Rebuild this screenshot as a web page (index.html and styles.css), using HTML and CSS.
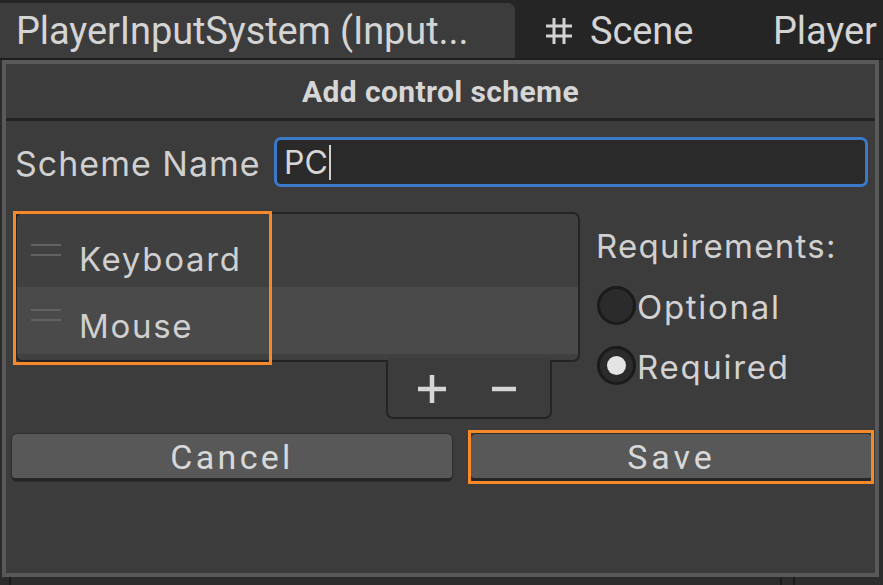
FILE: index.html
```html
<!DOCTYPE html>
<html>
<head>
<meta charset="utf-8">
<link rel="stylesheet" href="styles.css">
</head>
<body>
<div class="tabbar">
  <div class="tab active">PlayerInputSystem (Input...</div>
  <div class="tab scene">
    <svg class="hash" width="30" height="30" viewBox="0 0 30 30">
      <path d="M10 2V28M20 2V28M2 10H28M2 20H28" stroke="#d2d2d2" stroke-width="3" fill="none"/>
    </svg>
    <span>Scene</span>
  </div>
  <div class="tab">Player</div>
</div>
<div class="frame">
  <div class="header">Add control scheme</div>
  <div class="content">
    <div class="name-row">
      <span class="label">Scheme Name</span>
      <div class="input"><span class="value">PC</span><span class="caret"></span></div>
    </div>
    <div class="main">
      <div class="listcol">
        <div class="list">
          <div class="row"><span class="handle"></span><span class="row-text">Keyboard</span></div>
          <div class="row alt"><span class="handle"></span><span class="row-text">Mouse</span></div>
        </div>
        <div class="footer">
          <svg width="30" height="30" viewBox="0 0 30 30"><path d="M15 1V29M1 15H29" stroke="#d6d6d6" stroke-width="4.5" fill="none"/></svg>
          <svg width="26" height="30" viewBox="0 0 26 30"><path d="M1 15H25" stroke="#d6d6d6" stroke-width="4.5" fill="none"/></svg>
        </div>
        <div class="hl hl-list"></div>
      </div>
      <div class="req">
        <div class="req-title">Requirements:</div>
        <div class="radio"><span class="dot"></span><span>Optional</span></div>
        <div class="radio on"><span class="dot"></span><span>Required</span></div>
      </div>
    </div>
    <div class="buttons">
      <div class="btn">Cancel</div>
      <div class="btn save">Save<span class="hl hl-save"></span></div>
    </div>
  </div>
</div>
<div class="below">
  <span class="vline v1"></span>
  <span class="vline v2"></span>
  <span class="vline v3"></span>
</div>
</body>
</html>
```
FILE: styles.css
```css
html, body {
  margin: 0;
  padding: 0;
}
body {
  width: 883px;
  height: 585px;
  overflow: hidden;
  background: #2c2c2c;
  font-family: Inter, "Noto Sans", sans-serif;
  color: #d2d2d2;
}
.tabbar {
  height: 58px;
  background: #252525;
  display: flex;
  align-items: flex-end;
  border-bottom: 2px solid #1e1e1e;
  box-sizing: content-box;
}
.tab {
  height: 55px;
  display: flex;
  align-items: center;
  font-family: Roboto, sans-serif;
  font-size: 38px;
  letter-spacing: -0.1px;
  color: #d4d4d4;
  white-space: nowrap;
}
.tab.active {
  width: 515px;
  background: #3c3c3c;
  border-radius: 0 7px 0 0;
  padding-left: 16px;
  box-sizing: border-box;
}
.tab.scene {
  padding-left: 29px;
  width: 258px;
  box-sizing: border-box;
  gap: 16px;
}
.hash {
  display: block;
}
.frame {
  margin-left: 2px;
  width: 877px;
  height: 517px;
  box-sizing: border-box;
  border: 4px solid #595959;
  background: #3c3c3c;
  display: flex;
  flex-direction: column;
}
.header {
  height: 54px;
  border-bottom: 3px solid #242424;
  display: flex;
  align-items: center;
  justify-content: center;
  font-family: Roboto, sans-serif;
  font-weight: bold;
  font-size: 30px;
  letter-spacing: 0.4px;
  color: #d6d6d6;
  flex-shrink: 0;
}
.content {
  padding: 16px 7px 0 9px;
}
.name-row {
  display: flex;
  align-items: center;
  height: 50px;
}
.label {
  font-size: 34px;
  letter-spacing: 1px;
  width: 259px;
  flex-shrink: 0;
  color: #d0d0d0;
  padding-top: 2px;
}
.input {
  flex: 1;
  height: 50px;
  box-sizing: border-box;
  border: 3px solid #3b7acb;
  border-radius: 7px;
  background: #2a2a2a;
  display: flex;
  align-items: center;
  padding-left: 7px;
  font-size: 32px;
  color: #d6d6d6;
}
.caret {
  width: 2px;
  height: 35px;
  background: #d0d0d0;
  margin-left: 1px;
}
.main {
  display: flex;
  margin-top: 25px;
}
.listcol {
  position: relative;
  width: 565px;
  display: flex;
  flex-direction: column;
}
.list {
  border: 2px solid #242424;
  border-radius: 7px;
  background: #404040;
  padding: 2px 0 6px;
  position: relative;
  z-index: 1;
}
.row {
  height: 71px;
  display: flex;
  align-items: center;
  font-size: 33px;
  letter-spacing: 1.7px;
  color: #d0d0d0;
}
.row.alt {
  height: 67px;
  background: #4a4a4a;
}
.handle {
  width: 30px;
  height: 12px;
  margin-left: 14px;
  margin-right: 18px;
  border-top: 2px solid #626262;
  border-bottom: 2px solid #626262;
  box-sizing: border-box;
  align-self: flex-start;
  margin-top: 28px;
}
.row.alt .handle {
  margin-top: 22px;
}
.row-text {
  padding-top: 14px;
}
.row.alt .row-text {
  padding-top: 10px;
}
.footer {
  align-self: flex-end;
  margin-right: 28px;
  width: 166px;
  height: 59px;
  margin-top: -2px;
  box-sizing: border-box;
  border: 2px solid #242424;
  border-top: none;
  border-radius: 0 0 7px 7px;
  background: #3c3c3c;
  display: flex;
  align-items: center;
  padding-left: 29px;
  gap: 44px;
  padding-top: 0;
  position: relative;
  z-index: 2;
}
.footer::before {
  content: "";
  position: absolute;
  left: 0;
  right: 0;
  top: -2px;
  height: 4px;
  background: #3c3c3c;
}
.footer svg {
  position: relative;
  display: block;
}
.hl {
  position: absolute;
  border: 3px solid #f7892b;
  box-sizing: border-box;
  pointer-events: none;
  z-index: 5;
}
.hl-list {
  left: -2px;
  top: -1px;
  width: 259px;
  height: 154px;
}
.req {
  margin-left: 16px;
  padding-top: 14px;
}
.req-title {
  font-size: 33px;
  letter-spacing: 1.3px;
  color: #d0d0d0;
  height: 40px;
  line-height: 40px;
}
.radio {
  display: flex;
  align-items: center;
  height: 40px;
  margin-top: 19px;
  font-size: 33px;
  letter-spacing: 1.7px;
  color: #d2d2d2;
}
.radio + .radio {
  margin-top: 20px;
}
.radio .dot {
  width: 39px;
  height: 39px;
  border-radius: 50%;
  box-sizing: border-box;
  border: 3px solid #1b1b1b;
  background: #2b2b2b;
  margin-left: 1px;
  margin-right: 1px;
  display: flex;
  align-items: center;
  justify-content: center;
}
.radio.on .dot::after {
  content: "";
  width: 19px;
  height: 19px;
  border-radius: 50%;
  background: #e4e4e4;
}
.radio span:last-child {
  padding-top: 4px;
}
.buttons {
  display: flex;
  margin: 15px -4px 0 -3px;
  gap: 19px;
}
.btn {
  position: relative;
  flex: 0 0 440px;
  height: 47px;
  box-sizing: border-box;
  background: #585858;
  border-radius: 5px;
  border-bottom: 3px solid #262626;
  box-shadow: 0 0 0 1px #2e2e2e;
  display: flex;
  align-items: center;
  justify-content: center;
  font-family: Roboto, sans-serif;
  font-size: 34px;
  letter-spacing: 3.3px;
  color: #d8d8d8;
  padding-top: 2px;
}
.btn.save {
  flex: 1;
  letter-spacing: 4px;
}
.hl-save {
  left: -3px;
  top: -4px;
  right: -2px;
  bottom: -6px;
}
.below {
  position: relative;
  height: 8px;
}
.vline {
  position: absolute;
  top: 0;
  width: 2px;
  height: 8px;
  background: #1c1c1c;
}
.v1 { left: 9px; }
.v2 { left: 780px; }
.v3 { left: 793px; }
```
